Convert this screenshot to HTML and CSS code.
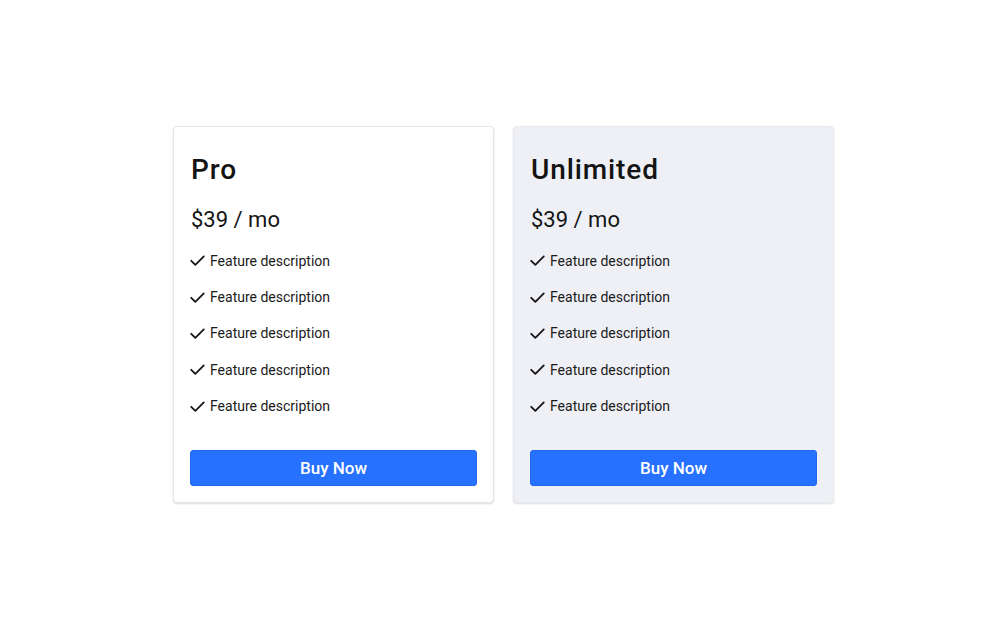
FILE: index.html
```html
<!DOCTYPE html>
<html lang="en">
<head>
<meta charset="utf-8">
<title>Pricing</title>
<link rel="stylesheet" href="styles.css">
</head>
<body>
<main class="page">
  <section class="plans">
    <article class="card">
      <h2 class="title">Pro</h2>
      <p class="price">$39 / mo</p>
      <ul class="features">
        <li><svg class="check" viewBox="0 0 16 16"><path d="M1.3 8.3 L5.7 12.7 L14.7 3.6"/></svg>Feature description</li>
        <li><svg class="check" viewBox="0 0 16 16"><path d="M1.3 8.3 L5.7 12.7 L14.7 3.6"/></svg>Feature description</li>
        <li><svg class="check" viewBox="0 0 16 16"><path d="M1.3 8.3 L5.7 12.7 L14.7 3.6"/></svg>Feature description</li>
        <li><svg class="check" viewBox="0 0 16 16"><path d="M1.3 8.3 L5.7 12.7 L14.7 3.6"/></svg>Feature description</li>
        <li><svg class="check" viewBox="0 0 16 16"><path d="M1.3 8.3 L5.7 12.7 L14.7 3.6"/></svg>Feature description</li>
      </ul>
      <button class="buy">Buy Now</button>
    </article>
    <article class="card card-alt">
      <h2 class="title">Unlimited</h2>
      <p class="price">$39 / mo</p>
      <ul class="features">
        <li><svg class="check" viewBox="0 0 16 16"><path d="M1.3 8.3 L5.7 12.7 L14.7 3.6"/></svg>Feature description</li>
        <li><svg class="check" viewBox="0 0 16 16"><path d="M1.3 8.3 L5.7 12.7 L14.7 3.6"/></svg>Feature description</li>
        <li><svg class="check" viewBox="0 0 16 16"><path d="M1.3 8.3 L5.7 12.7 L14.7 3.6"/></svg>Feature description</li>
        <li><svg class="check" viewBox="0 0 16 16"><path d="M1.3 8.3 L5.7 12.7 L14.7 3.6"/></svg>Feature description</li>
        <li><svg class="check" viewBox="0 0 16 16"><path d="M1.3 8.3 L5.7 12.7 L14.7 3.6"/></svg>Feature description</li>
      </ul>
      <button class="buy">Buy Now</button>
    </article>
  </section>
</main>
</body>
</html>
```

FILE: styles.css
```css
* { box-sizing: border-box; }
html, body { margin: 0; padding: 0; background: #ffffff; }
body { font-family: Roboto, "Noto Sans", Arial, sans-serif; color: #151515; }
.page {
  min-height: 629px;
  display: flex;
  align-items: center;
  justify-content: center;
  padding-left: 7px;
}
.plans {
  display: flex;
  gap: 19px;
}
.card {
  width: 321px;
  padding: 26px 16px 16px;
  background: #ffffff;
  border: 1px solid #e6e6e9;
  border-radius: 4px;
  box-shadow: 0 1px 2px rgba(0, 0, 0, 0.14);
  display: flex;
  flex-direction: column;
}
.card-alt { background: #eff0f5; border-color: #e9eaef; }
.title {
  margin: 0 0 0 1px;
  font-size: 28px;
  line-height: 34px;
  font-weight: 500;
  letter-spacing: 0.9px;
  color: #141414;
}
.price {
  margin: 19px 0 0 1px;
  font-size: 22px;
  line-height: 28px;
  font-weight: 400;
  color: #141414;
}
.features {
  list-style: none;
  margin: 9px 0 0;
  padding: 0;
}
.features li {
  display: flex;
  align-items: center;
  gap: 5px;
  height: 36.4px;
  font-size: 14px;
  color: #1a1a1a;
}
.check {
  width: 15px;
  height: 15px;
  fill: none;
  stroke: #151515;
  stroke-width: 1.9;
  stroke-linecap: round;
  stroke-linejoin: round;
}
.buy {
  margin-top: 26px;
  height: 36px;
  width: 100%;
  border: 1px solid #2266ee;
  border-radius: 3px;
  background: #2671ff;
  color: #ffffff;
  font-family: Roboto, "Noto Sans", Arial, sans-serif;
  font-size: 17px;
  font-weight: 500;
  cursor: pointer;
}
```
